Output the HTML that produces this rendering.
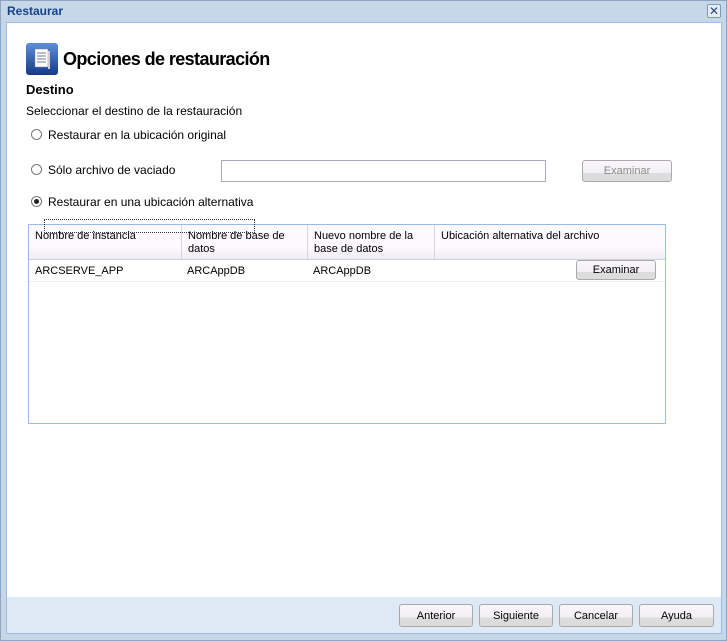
<!DOCTYPE html>
<html><head><meta charset="utf-8"><style>
*{box-sizing:border-box;margin:0;padding:0}
body{width:727px;height:641px;background:#c9d8e8;font-family:"Liberation Sans",sans-serif;font-size:12px;color:#000;position:relative;overflow:hidden}
.a{position:absolute}
.btn{position:absolute;border:1px solid #a9a9a9;border-radius:3px;background:linear-gradient(#f9f6fa 0,#f3f0f5 60%,#dcdcdc 60%,#dcdcdc 100%);text-align:center;font-size:11px}
.radio{position:absolute;width:11px;height:11px;border:1px solid #777;border-radius:50%;background:#fff}
.th{position:absolute;top:0;height:34px;border-right:1px solid #d6d6e0;padding:5px 6px;line-height:13px;font-size:11px;background:linear-gradient(#fdfaff 0,#fdfaff 60%,#f0eef4 100%)}
</style></head><body>
<div class="a" style="left:0;top:0;width:727px;height:641px;border:1px solid #8fa6c2;background:#c6d7e8"></div>
<div class="a" style="left:7px;top:4px;font-weight:bold;color:#15428b;font-size:12px">Restaurar</div>
<div class="a" style="left:707px;top:4px;width:14px;height:14px;border:1px solid #7e9ac0;border-radius:2px;background:#e4edf7;color:#29497a;font-size:12px;line-height:12px;text-align:center">✕</div>
<div class="a" style="left:6px;top:22px;width:716px;height:612px;border:1px solid #9ebde8;background:#fff"></div>
<div class="a" style="left:7px;top:597px;width:714px;height:36px;background:#dfe8f5"></div>
<svg class="a" style="left:26px;top:43px" width="32" height="32" viewBox="0 0 32 32"><defs><linearGradient id="g" x1="0" y1="0" x2="0" y2="1"><stop offset="0" stop-color="#5d8fd8"/><stop offset="1" stop-color="#16388a"/></linearGradient></defs><rect width="32" height="32" rx="3" fill="url(#g)"/><rect x="9" y="6" width="13" height="18" fill="#fff" stroke="#889" stroke-width=".5"/><path d="M11 10h9M11 13h9M11 16h9M11 19h9" stroke="#6a7d9a" stroke-width="1"/><rect x="22" y="8" width="2" height="18" fill="#ccd"/></svg>
<div class="a" style="left:63px;top:49px;font-size:18px;font-weight:bold;letter-spacing:-0.6px">Opciones de restauración</div>
<div class="a" style="left:26px;top:82px;font-weight:bold;font-size:13px">Destino</div>
<div class="a" style="left:26px;top:104px">Seleccionar el destino de la restauración</div>
<div class="radio" style="left:31px;top:129px"></div>
<div class="a" style="left:48px;top:128px">Restaurar en la ubicación original</div>
<div class="radio" style="left:31px;top:164px"></div>
<div class="a" style="left:48px;top:163px">Sólo archivo de vaciado</div>
<div class="a" style="left:221px;top:160px;width:325px;height:22px;border:1px solid #aab"></div>
<div class="btn" style="left:582px;top:160px;width:90px;height:22px;line-height:21px;color:#8a8a8a">Examinar</div>
<div class="radio" style="left:31px;top:196px"></div>
<div class="a" style="left:34px;top:199px;width:5px;height:5px;border-radius:50%;background:#222"></div>
<div class="a" style="left:48px;top:195px">Restaurar en una ubicación alternativa</div>
<div class="a" style="left:28px;top:224px;width:638px;height:200px;border:1px solid #99bbe8;background:#fff">
<div class="th" style="left:0;width:153px">Nombre de instancia</div>
<div class="th" style="left:153px;width:126px">Nombre de base de datos</div>
<div class="th" style="left:279px;width:127px">Nuevo nombre de la base de datos</div>
<div class="th" style="left:406px;width:230px;border-right:none">Ubicación alternativa del archivo</div>
<div class="a" style="left:0;top:34px;width:636px;border-top:1px solid #d0d0d8"></div>
<div class="a" style="left:6px;top:40px;font-size:11px">ARCSERVE_APP</div>
<div class="a" style="left:158px;top:40px;font-size:11px">ARCAppDB</div>
<div class="a" style="left:284px;top:40px;font-size:11px">ARCAppDB</div>
<div class="btn" style="left:547px;top:35px;width:80px;height:20px;line-height:19px">Examinar</div>
<div class="a" style="left:0;top:56px;width:636px;border-top:1px solid #ededf0"></div>
</div>
<div class="a" style="left:44px;top:219px;width:211px;height:14px;border:1px dotted #333"></div>
<div class="btn" style="left:399px;top:604px;width:74px;height:23px;line-height:22px">Anterior</div>
<div class="btn" style="left:479px;top:604px;width:74px;height:23px;line-height:22px">Siguiente</div>
<div class="btn" style="left:559px;top:604px;width:74px;height:23px;line-height:22px">Cancelar</div>
<div class="btn" style="left:639px;top:604px;width:75px;height:23px;line-height:22px">Ayuda</div>
</body></html>
